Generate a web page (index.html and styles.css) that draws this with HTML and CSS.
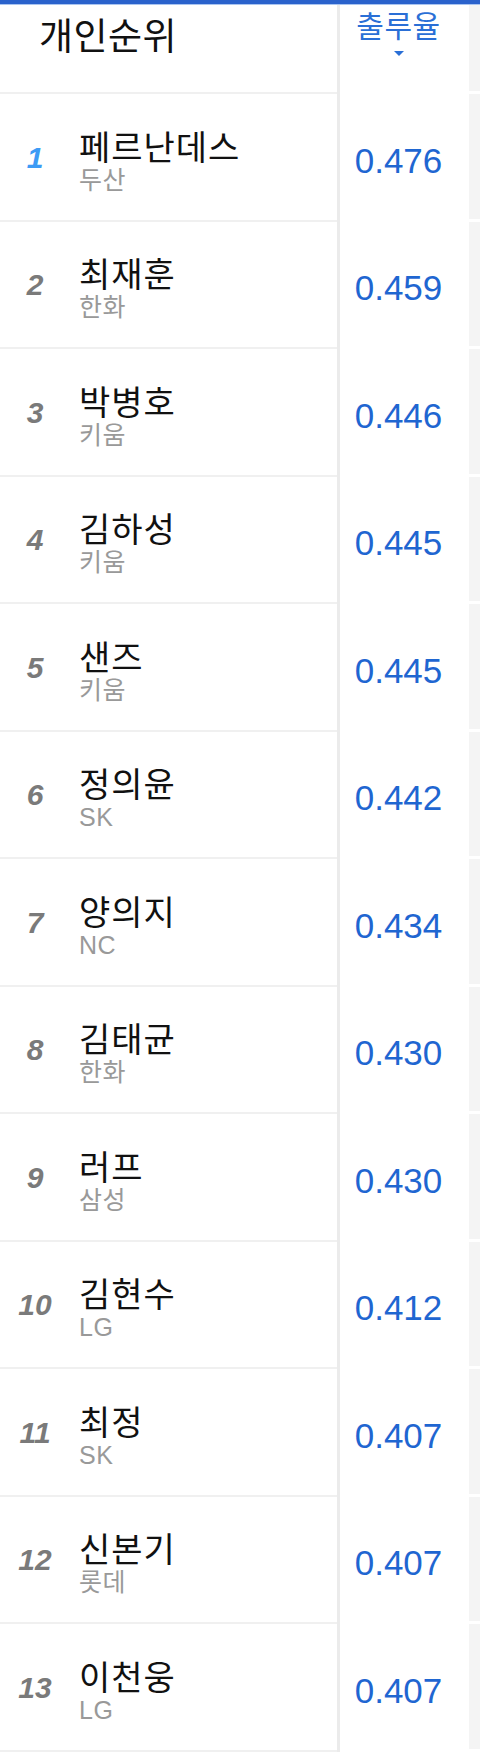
FILE: index.html
```html
<!DOCTYPE html>
<html lang="ko">
<head>
<meta charset="utf-8">
<link rel="stylesheet" href="styles.css">
</head>
<body>
<div class="topbar"></div>
<div class="table">
  <div class="row head">
    <div class="cell-main"><span class="title">개인순위</span></div>
    <div class="cell-val"><span class="sort">출루율</span><span class="tri"></span></div>
    <div class="cell-next"></div>
  </div>
  <div class="row">
    <div class="cell-main"><span class="rank first">1</span><div class="player"><span class="name">페르난데스</span><span class="team">두산</span></div></div>
    <div class="cell-val"><span class="val">0.476</span></div>
    <div class="cell-next"></div>
  </div>
  <div class="row">
    <div class="cell-main"><span class="rank">2</span><div class="player"><span class="name">최재훈</span><span class="team">한화</span></div></div>
    <div class="cell-val"><span class="val">0.459</span></div>
    <div class="cell-next"></div>
  </div>
  <div class="row">
    <div class="cell-main"><span class="rank">3</span><div class="player"><span class="name">박병호</span><span class="team">키움</span></div></div>
    <div class="cell-val"><span class="val">0.446</span></div>
    <div class="cell-next"></div>
  </div>
  <div class="row">
    <div class="cell-main"><span class="rank">4</span><div class="player"><span class="name">김하성</span><span class="team">키움</span></div></div>
    <div class="cell-val"><span class="val">0.445</span></div>
    <div class="cell-next"></div>
  </div>
  <div class="row">
    <div class="cell-main"><span class="rank">5</span><div class="player"><span class="name">샌즈</span><span class="team">키움</span></div></div>
    <div class="cell-val"><span class="val">0.445</span></div>
    <div class="cell-next"></div>
  </div>
  <div class="row">
    <div class="cell-main"><span class="rank">6</span><div class="player"><span class="name">정의윤</span><span class="team">SK</span></div></div>
    <div class="cell-val"><span class="val">0.442</span></div>
    <div class="cell-next"></div>
  </div>
  <div class="row">
    <div class="cell-main"><span class="rank">7</span><div class="player"><span class="name">양의지</span><span class="team">NC</span></div></div>
    <div class="cell-val"><span class="val">0.434</span></div>
    <div class="cell-next"></div>
  </div>
  <div class="row">
    <div class="cell-main"><span class="rank">8</span><div class="player"><span class="name">김태균</span><span class="team">한화</span></div></div>
    <div class="cell-val"><span class="val">0.430</span></div>
    <div class="cell-next"></div>
  </div>
  <div class="row">
    <div class="cell-main"><span class="rank">9</span><div class="player"><span class="name">러프</span><span class="team">삼성</span></div></div>
    <div class="cell-val"><span class="val">0.430</span></div>
    <div class="cell-next"></div>
  </div>
  <div class="row">
    <div class="cell-main"><span class="rank">10</span><div class="player"><span class="name">김현수</span><span class="team">LG</span></div></div>
    <div class="cell-val"><span class="val">0.412</span></div>
    <div class="cell-next"></div>
  </div>
  <div class="row">
    <div class="cell-main"><span class="rank">11</span><div class="player"><span class="name">최정</span><span class="team">SK</span></div></div>
    <div class="cell-val"><span class="val">0.407</span></div>
    <div class="cell-next"></div>
  </div>
  <div class="row">
    <div class="cell-main"><span class="rank">12</span><div class="player"><span class="name">신본기</span><span class="team">롯데</span></div></div>
    <div class="cell-val"><span class="val">0.407</span></div>
    <div class="cell-next"></div>
  </div>
  <div class="row">
    <div class="cell-main"><span class="rank">13</span><div class="player"><span class="name">이천웅</span><span class="team">LG</span></div></div>
    <div class="cell-val"><span class="val">0.407</span></div>
    <div class="cell-next"></div>
  </div>
</div>
</body>
</html>
```
FILE: styles.css
```css
html, body {
  margin: 0;
  padding: 0;
  background: #ffffff;
}
body {
  width: 480px;
  overflow: hidden;
  font-family: "Noto Sans CJK KR", "Liberation Sans", sans-serif;
}
.topbar {
  height: 4px;
  background: #2a62cc;
  border-bottom: 1px solid #a9c4f0;
}
.table {
  display: flex;
  flex-direction: column;
}
.row {
  display: flex;
  height: 127.5px;
}
.row.head {
  height: 89px;
}
.cell-main {
  width: 337px;
  flex: none;
  box-sizing: border-box;
  border-bottom: 2px solid #f0f0f0;
  display: flex;
  align-items: center;
}
.cell-val {
  width: 132px;
  flex: none;
  border-left: 3px solid #ebebeb;
  box-sizing: border-box;
  display: flex;
  flex-direction: column;
  align-items: center;
  justify-content: center;
  padding-right: 12px;
}
.cell-next {
  flex: 1;
  background: #f4f4f4;
  border-bottom: 3px solid #ffffff;
}
.head .cell-main {
  align-items: flex-start;
}
.title {
  font-size: 37px;
  line-height: 42px;
  letter-spacing: 0.5px;
  color: #111111;
  padding: 8px 0 0 39px;
}
.head .cell-val {
  justify-content: flex-start;
  padding-top: 1px;
}
.sort {
  font-size: 30px;
  line-height: 36px;
  letter-spacing: 0.5px;
  color: #2a6fd6;
}
.tri {
  width: 0;
  height: 0;
  border-left: 5px solid transparent;
  border-right: 5px solid transparent;
  border-top: 5px solid #2a6fd6;
  margin-top: 9px;
}
.rank {
  width: 70px;
  flex: none;
  text-align: center;
  font-family: "Liberation Sans", Arial, sans-serif;
  font-style: italic;
  font-weight: bold;
  font-size: 30px;
  color: #7a7a7a;
  padding-top: 2px;
}
.rank.first {
  color: #3d9bf5;
}
.player {
  display: flex;
  flex-direction: column;
  padding-left: 9px;
  padding-top: 6px;
}
.name {
  font-size: 34px;
  line-height: 40px;
  letter-spacing: 1px;
  color: #111111;
}
.team {
  font-family: "Liberation Sans", "Noto Sans CJK KR", sans-serif;
  font-size: 25px;
  line-height: 28px;
  letter-spacing: 0.5px;
  color: #999999;
}
.val {
  font-family: "Liberation Sans", Arial, sans-serif;
  font-size: 35px;
  color: #1f66d1;
  padding-top: 6px;
}
```
